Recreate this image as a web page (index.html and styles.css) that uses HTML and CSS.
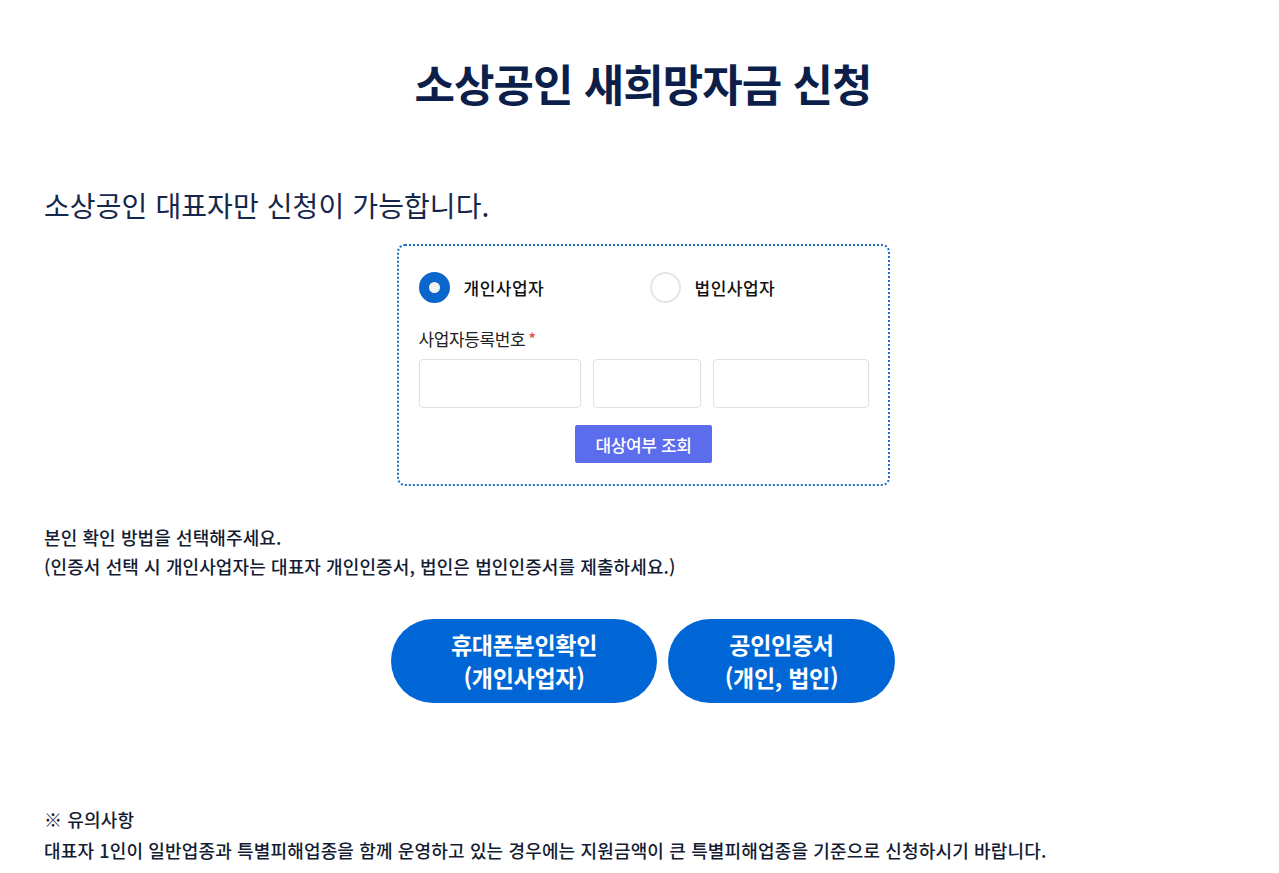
FILE: index.html
```html
<!DOCTYPE html>
<html lang="ko">
<head>
<meta charset="utf-8">
<link rel="stylesheet" href="styles.css">
</head>
<body>
<div class="page">
  <h1 class="title">소상공인 새희망자금 신청</h1>
  <p class="lead">소상공인 대표자만 신청이 가능합니다.</p>
  <div class="box">
    <div class="radios">
      <label class="radio checked"><span class="dot"></span><span class="rlabel">개인사업자</span></label>
      <label class="radio"><span class="dot"></span><span class="rlabel">법인사업자</span></label>
    </div>
    <div class="field-label">사업자등록번호<span class="req">*</span></div>
    <div class="inputs">
      <input class="inp inp1" type="text">
      <input class="inp inp2" type="text">
      <input class="inp inp3" type="text">
    </div>
    <div class="btnrow"><button class="check-btn">대상여부 조회</button></div>
  </div>
  <div class="guide">
    <p>본인 확인 방법을 선택해주세요.</p>
    <p>(인증서 선택 시 개인사업자는 대표자 개인인증서, 법인은 법인인증서를 제출하세요.)</p>
  </div>
  <div class="auth">
    <button class="pill pill1">휴대폰본인확인<br>(개인사업자)</button>
    <button class="pill pill2">공인인증서<br>(개인, 법인)</button>
  </div>
  <div class="notice">
    <p>※ 유의사항</p>
    <p>대표자 1인이 일반업종과 특별피해업종을 함께 운영하고 있는 경우에는 지원금액이 큰 특별피해업종을 기준으로 신청하시기 바랍니다.</p>
  </div>
</div>
</body>
</html>
```
FILE: styles.css
```css
* { box-sizing: border-box; }
html, body { margin: 0; padding: 0; background: #fff; }
body {
  font-family: "Noto Sans CJK KR", "Noto Sans", sans-serif;
  color: #111;
}
.page {
  margin-left: 44px;
  width: 1198px;
}
.title {
  margin: 0;
  padding-top: 52px;
  text-align: center;
  font-size: 44px;
  line-height: 62px;
  font-weight: 700;
  color: #0c1f4b;
  letter-spacing: -1px;
}
.lead {
  margin: 71px 0 0;
  font-size: 28px;
  line-height: 40px;
  font-weight: 400;
  color: #16274b;
  letter-spacing: 0.1px;
}
.box {
  width: 493px;
  margin: 19px auto 0;
  border: 2px dotted #1a6fc8;
  border-radius: 8px;
  padding: 25px 19px 21px 20px;
}
.radios {
  display: flex;
  height: 32px;
  align-items: center;
}
.radio {
  display: flex;
  align-items: center;
  width: 231px;
  flex: none;
}
.dot {
  width: 31px;
  height: 31px;
  border-radius: 50%;
  border: 2px solid #e6e6e6;
  background: #fff;
  flex: none;
}
.radio.checked .dot {
  border: 10px solid #0a66cc;
  background: #f3f3f3;
}
.rlabel {
  margin-left: 14px;
  font-size: 17px;
  font-weight: 500;
  color: #111;
  letter-spacing: 0.5px;
}
.field-label {
  margin-top: 24px;
  font-size: 17px;
  line-height: 24px;
  color: #222;
  letter-spacing: -0.4px;
}
.req { color: #e8463c; margin-left: 3px; }
.inputs {
  display: flex;
  gap: 12px;
  margin-top: 8px;
}
.inp {
  height: 49px;
  border: 1px solid #e0e0e0;
  border-radius: 4px;
  background: #fff;
  padding: 0 10px;
  font: inherit;
}
.inp1 { width: 162px; }
.inp2 { width: 108px; }
.inp3 { width: 156px; }
.btnrow {
  display: flex;
  justify-content: center;
  margin-top: 17px;
}
.check-btn {
  width: 137px;
  height: 38px;
  border: 0;
  border-radius: 2px;
  background: #5b6ded;
  color: #fff;
  font-family: inherit;
  font-size: 17px;
  font-weight: 500;
  letter-spacing: -0.4px;
  padding: 0;
}
.guide {
  margin-top: 37px;
}
.guide p, .notice p {
  margin: 0;
  font-size: 18px;
  line-height: 29px;
  font-weight: 500;
  color: #141c33;
  letter-spacing: 0.1px;
}
.notice p { line-height: 31px; letter-spacing: 0.15px; }
.auth {
  display: flex;
  justify-content: center;
  gap: 11px;
  margin-top: 38px;
}
.pill {
  height: 84px;
  border: 0;
  border-radius: 42px;
  background: #0066d6;
  color: #fff;
  font-family: inherit;
  font-size: 23px;
  font-weight: 700;
  line-height: 33px;
  letter-spacing: -0.3px;
  padding: 0;
}
.pill1 { width: 266px; }
.pill2 { width: 227px; }
.notice {
  margin-top: 101px;
}
```
